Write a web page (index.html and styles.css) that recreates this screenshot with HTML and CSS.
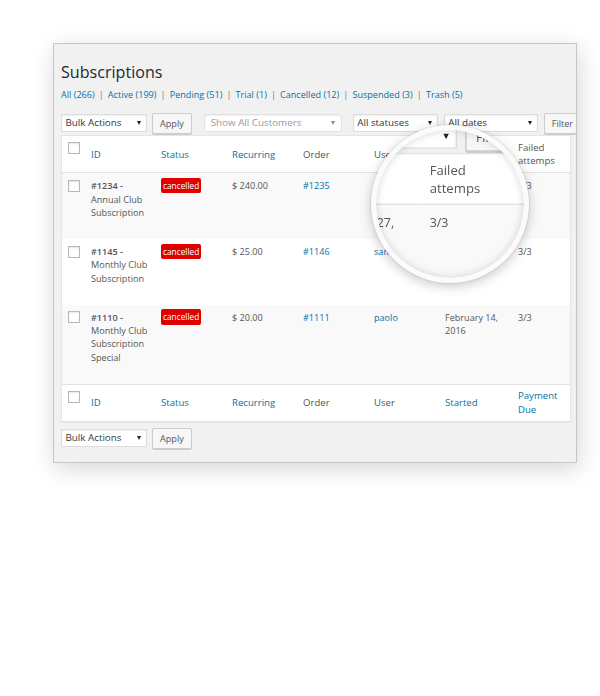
FILE: index.html
```html
<!DOCTYPE html>
<html lang="en">
<head>
  <meta charset="UTF-8">
  <title>Subscriptions</title>
  <link rel="stylesheet" href="styles.css">
</head>
<body>
  <div class="page">
    <div class="panel">
      <h1>Subscriptions</h1>
      <ul class="subsubsub">
        <li><a href="#">All (266)</a></li>
        <li><a href="#">Active (199)</a></li>
        <li><a href="#">Pending (51)</a></li>
        <li><a href="#">Trial (1)</a></li>
        <li><a href="#">Cancelled (12)</a></li>
        <li><a href="#">Suspended (3)</a></li>
        <li><a href="#">Trash (5)</a></li>
      </ul>

      <div class="tablenav">
        <div class="bulkactions">
          <div class="select select-bulk">Bulk Actions</div>
          <button class="button">Apply</button>
        </div>
        <div class="select select-customer">Show All Customers</div>
        <div class="select select-status">All statuses</div>
        <div class="select select-date">All dates</div>
        <button class="button">Filter</button>
      </div>

      <table class="subscriptions">
        <colgroup>
          <col class="col-cb">
          <col class="col-id">
          <col class="col-status">
          <col class="col-recurring">
          <col class="col-order">
          <col class="col-user">
          <col class="col-started">
          <col class="col-last">
        </colgroup>
        <thead>
          <tr>
            <th class="check-column"><input type="checkbox"></th>
            <th class="sortable"><a href="#">ID</a></th>
            <th class="sortable"><a href="#">Status</a></th>
            <th class="sortable"><a href="#">Recurring</a></th>
            <th>Order</th>
            <th>User</th>
            <th class="sortable"><a href="#">Started</a></th>
            <th>Failed attemps</th>
          </tr>
        </thead>
        <tbody>
          <tr>
            <th class="check-column"><input type="checkbox"></th>
            <td><strong>#1234 -</strong> Annual Club Subscription<div class="row-actions"></div></td>
            <td><span class="status-badge">cancelled</span></td>
            <td>$ 240.00</td>
            <td><a href="#">#1235</a></td>
            <td><a href="#">john</a></td>
            <td>January 27, 2016</td>
            <td>3/3</td>
          </tr>
          <tr>
            <th class="check-column"><input type="checkbox"></th>
            <td><strong>#1145 -</strong> Monthly Club Subscription<div class="row-actions"></div></td>
            <td><span class="status-badge">cancelled</span></td>
            <td>$ 25.00</td>
            <td><a href="#">#1146</a></td>
            <td><a href="#">samuel</a></td>
            <td>March 3, 2016</td>
            <td>3/3</td>
          </tr>
          <tr>
            <th class="check-column"><input type="checkbox"></th>
            <td><strong>#1110 -</strong> Monthly Club Subscription Special<div class="row-actions"></div></td>
            <td><span class="status-badge">cancelled</span></td>
            <td>$ 20.00</td>
            <td><a href="#">#1111</a></td>
            <td><a href="#">paolo</a></td>
            <td>February 14, 2016</td>
            <td>3/3</td>
          </tr>
        </tbody>
        <tfoot>
          <tr>
            <th class="check-column"><input type="checkbox"></th>
            <th class="sortable"><a href="#">ID</a></th>
            <th class="sortable"><a href="#">Status</a></th>
            <th class="sortable"><a href="#">Recurring</a></th>
            <th>Order</th>
            <th>User</th>
            <th class="sortable"><a href="#">Started</a></th>
            <th class="sortable"><a href="#">Payment Due</a></th>
          </tr>
        </tfoot>
      </table>

      <div class="tablenav tablenav-bottom">
        <div class="bulkactions">
          <div class="select select-bulk">Bulk Actions</div>
          <button class="button">Apply</button>
        </div>
      </div>
    </div>
  </div>

  <!-- magnifier over the Failed attemps column -->
  <div class="lens">
    <div class="lens-view"></div>
  </div>

  <script src="lens.js"></script>
</body>
</html>
```

FILE: styles.css
```css
body {
  margin: 0;
  background: #fff;
  font-family: "Open Sans", sans-serif;
  font-size: 9.1px;
  line-height: 13.4px;
  color: #555;
}
a {
  color: #0073aa;
  text-decoration: none;
}
.page {
  position: relative;
  width: 600px;
  height: 696px;
  padding: 43px 0 0 53px;
  box-sizing: border-box;
}
.panel {
  width: 524px;
  height: 420px;
  box-sizing: border-box;
  padding: 18px 0 0 7px;
  background: #f1f1f1;
  border: 1px solid #c6c6c6;
  box-shadow: 2px 6px 22px rgba(0, 0, 0, 0.16);
  overflow: hidden;
}
h1 {
  margin: 0;
  font-size: 16.1px;
  line-height: 20px;
  font-weight: 400;
  color: #23282d;
}
.subsubsub {
  display: flex;
  list-style: none;
  margin: 6px 0 0;
  padding: 0;
  line-height: 14px;
  white-space: nowrap;
}
.subsubsub li + li::before {
  content: "|";
  margin: 0 4.1px;
  color: #72777c;
}

/* filter bar */
.tablenav {
  display: flex;
  align-items: center;
  height: 22px;
  margin-top: 10px;
  white-space: nowrap;
}
.tablenav-bottom {
  margin-top: 5px;
}
.bulkactions {
  display: flex;
  align-items: center;
  gap: 5px;
  margin-right: 12px;
}
.select {
  position: relative;
  flex: none;
  height: 18px;
  box-sizing: border-box;
  padding: 0 14px 0 3.5px;
  background: #fff;
  border: 1px solid #ddd;
  box-shadow: inset 0 1px 2px rgba(0, 0, 0, 0.07);
  font-size: 9.8px;
  line-height: 16px;
  color: #32373c;
}
.select::after {
  content: "";
  position: absolute;
  right: 5px;
  top: 6px;
  border-left: 2.5px solid transparent;
  border-right: 2.5px solid transparent;
  border-top: 4px solid #222;
}
.select-bulk { width: 86px; }
.select-customer {
  width: 138px;
  margin-right: 11px;
  padding-left: 6px;
  border-color: #e2e2e2;
  border-radius: 2px;
  color: #999;
}
.select-customer::after {
  right: 6px;
  border-top-color: #888;
}
.select-status { width: 85px; margin-right: 6px; }
.select-date { width: 94px; margin-right: 6px; }
.button {
  flex: none;
  height: 21px;
  box-sizing: border-box;
  padding: 0 7px;
  background: #f7f7f7;
  border: 1px solid #ccc;
  border-radius: 2px;
  box-shadow: 0 1px 0 #ccc;
  font-family: inherit;
  font-size: 9.1px;
  line-height: 19px;
  color: #555;
}

/* list table */
.subscriptions {
  width: 510px;
  margin-top: 1px;
  table-layout: fixed;
  border-spacing: 0;
  background: #fff;
  border: 1px solid #e5e5e5;
  box-shadow: 0 1px 1px rgba(0, 0, 0, 0.04);
}
.col-cb { width: 21px; }
.col-id { width: 70px; }
.col-status,
.col-recurring,
.col-order,
.col-user { width: 71px; }
.col-started { width: 73px; }
.col-last { width: 60px; }
.subscriptions th,
.subscriptions td {
  padding: 6px 4px 6px 8px;
  text-align: left;
  vertical-align: top;
  font-weight: 400;
}
.subscriptions thead th,
.subscriptions tfoot th {
  padding-top: 4.8px;
  padding-bottom: 4.8px;
  vertical-align: middle;
  font-size: 9.6px;
  color: #555;
}
.subscriptions thead th {
  border-bottom: 1px solid #e1e1e1;
}
.subscriptions tfoot th {
  border-top: 1px solid #e1e1e1;
}
.subscriptions tbody tr:nth-child(odd) {
  background: #f9f9f9;
}
.subscriptions .check-column {
  padding: 6.5px 0 0 6px;
  vertical-align: top;
}
.subscriptions thead .check-column {
  padding-top: 5.7px;
  vertical-align: top;
}
.subscriptions tfoot .check-column {
  padding-top: 6.3px;
  vertical-align: top;
}
.check-column input {
  display: block;
  width: 12px;
  height: 12px;
  margin: 0;
  box-sizing: border-box;
  appearance: none;
  background: #fff;
  border: 1px solid #b4b9be;
  box-shadow: inset 0 1px 2px rgba(0, 0, 0, 0.1);
}
.subscriptions strong {
  font-weight: 600;
}
.row-actions {
  height: 13.4px;
}
.status-badge {
  display: inline-block;
  vertical-align: top;
  margin-top: -1.5px;
  padding: 0 2px;
  border-radius: 2px;
  background: #e10000;
  color: #fff;
  font-size: 8.3px;
  line-height: 15.5px;
}

/* magnifier */
.lens {
  position: absolute;
  left: 371px;
  top: 125px;
  width: 148px;
  height: 148px;
  border: 5px solid #fbfbfb;
  border-radius: 50%;
  overflow: hidden;
  background: #fff;
  box-shadow: 0 0 0 1px rgba(0, 0, 0, 0.05), 0 3px 12px rgba(0, 0, 0, 0.22);
}
.lens::after {
  content: "";
  position: absolute;
  inset: 0;
  border-radius: 50%;
  box-shadow: inset 0 0 9px rgba(0, 0, 0, 0.16);
}
.lens-view {
  position: absolute;
  left: -656.2px;
  top: -161.6px;
  width: 600px;
  transform: scale(1.37);
  transform-origin: 0 0;
}
/* the zoomed copy runs on past the panel edge */
.lens-view .panel {
  width: 580px;
}
.lens-view .subscriptions {
  width: 560px;
}
.lens-view .col-last {
  width: 110px;
}
.lens-view .subscriptions th:last-child,
.lens-view .subscriptions td:last-child {
  padding-right: 54px;
}
```

FILE: lens.js
```js
// Put a copy of the page inside the magnifier; the CSS scales and shifts it.
var view = document.querySelector('.lens-view');
view.appendChild(document.querySelector('.page').cloneNode(true));
```
